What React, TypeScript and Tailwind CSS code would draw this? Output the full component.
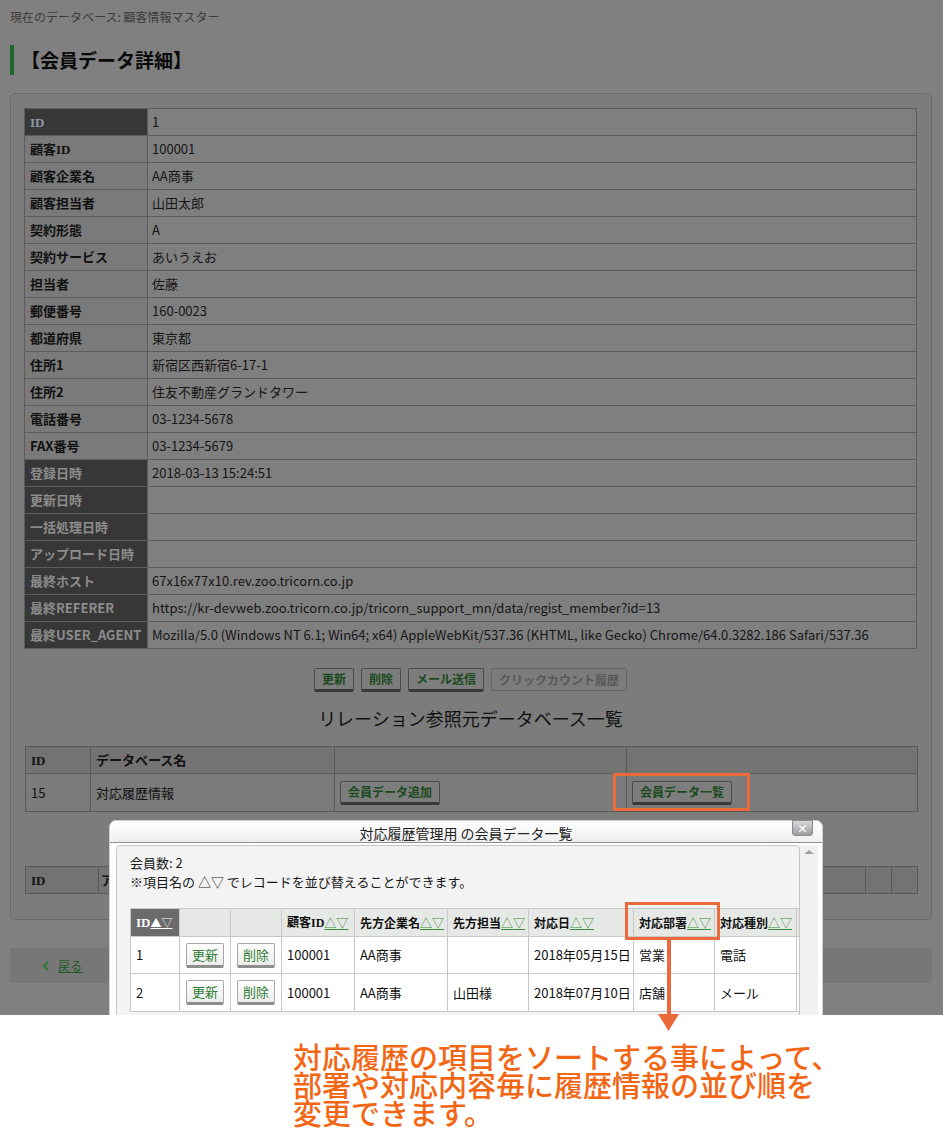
import React from "react";

type Row = [string, string, boolean];

const rows: Row[] = [
  ["ID", "1", true],
  ["顧客ID", "100001", false],
  ["顧客企業名", "AA商事", false],
  ["顧客担当者", "山田太郎", false],
  ["契約形態", "A", false],
  ["契約サービス", "あいうえお", false],
  ["担当者", "佐藤", false],
  ["郵便番号", "160-0023", false],
  ["都道府県", "東京都", false],
  ["住所1", "新宿区西新宿6-17-1", false],
  ["住所2", "住友不動産グランドタワー", false],
  ["電話番号", "03-1234-5678", false],
  ["FAX番号", "03-1234-5679", false],
  ["登録日時", "2018-03-13 15:24:51", true],
  ["更新日時", "", true],
  ["一括処理日時", "", true],
  ["アップロード日時", "", true],
  ["最終ホスト", "67x16x77x10.rev.zoo.tricorn.co.jp", true],
  ["最終REFERER", "https://kr-devweb.zoo.tricorn.co.jp/tricorn_support_mn/data/regist_member?id=13", true],
  [
    "最終USER_AGENT",
    "Mozilla/5.0 (Windows NT 6.1; Win64; x64) AppleWebKit/537.36 (KHTML, like Gecko) Chrome/64.0.3282.186 Safari/537.36",
    true,
  ],
];

function WithSerifID({ text }: { text: string }) {
  const parts = text.split(/(ID)/);
  return (
    <>
      {parts.map((p, i) =>
        p === "ID" ? (
          <span key={i} className="font-['Liberation_Serif',serif]">
            ID
          </span>
        ) : (
          <span key={i}>{p}</span>
        )
      )}
    </>
  );
}

function PageBtn({ children, disabled }: { children: React.ReactNode; disabled?: boolean }) {
  if (disabled) {
    return (
      <span className="inline-flex items-center h-[23px] px-[7px] rounded-[2px] border border-[#666666] bg-[#7c7c7c] text-[12px] font-bold text-[#585858] leading-none">
        {children}
      </span>
    );
  }
  return (
    <span className="inline-flex items-center h-[24px] px-[7px] rounded-[2px] border border-[#4c4c4c] border-b-[3px] border-b-[#3a3a3a] bg-[#7d7d7d] text-[12px] font-bold text-[#1b4a1e] leading-none">
      {children}
    </span>
  );
}

function ModalBtn({ children }: { children: React.ReactNode }) {
  return (
    <span className="inline-flex items-center justify-center h-[25px] w-[38px] rounded-[2px] border border-[#a8a8a8] border-b-[3px] border-b-[#8c8c8c] bg-linear-to-b from-white to-[#ececec] text-[13px] text-[#2e7d32] leading-none">
      {children}
    </span>
  );
}

function Sort({ white, filled }: { white?: boolean; filled?: boolean }) {
  return (
    <span
      className={
        white
          ? "underline text-white font-normal text-[11px]"
          : "underline text-[#3b8f3b] font-normal text-[12px]"
      }
    >
      {filled ? "▲▽" : "△▽"}
    </span>
  );
}

const modalCols = [49, 51, 51, 73, 93, 81, 105, 81, 82, 100];
const modalHeaders = ["ID", "", "", "顧客ID", "先方企業名", "先方担当", "対応日", "対応部署", "対応種別", "対応内容"];
const modalRows = [
  ["1", "btn", "btn", "100001", "AA商事", "", "2018年05月15日", "営業", "電話", ""],
  ["2", "btn", "btn", "100001", "AA商事", "山田様", "2018年07月10日", "店舗", "メール", ""],
];

export default function App() {
  return (
    <div className="relative w-[943px] h-[1137px] overflow-hidden bg-white font-['Noto_Sans_CJK_JP',sans-serif] text-[#111111]">
      {/* page area (dimmed by modal overlay) */}
      <div className="relative h-[1015px] overflow-hidden bg-[#808080]">
        <div className="px-[10px]">
          <div className="pt-[9px] text-[12px] leading-[16px] text-[#3c3c3c]">現在のデータベース: 顧客情報マスター</div>

          <div className="mt-[20px] h-[30px] flex items-center border-l-[4px] border-[#1d6a2a] pl-[7px] text-[19px] font-bold text-[#0a0a0a]">
            【会員データ詳細】
          </div>

          {/* main panel */}
          <div className="mt-[18px] w-[922px] rounded-[5px] border border-[#6a6a6a] bg-[#7c7c7c] pt-[14px] pl-[13px] pb-[25px]">
            <div className="w-[893px] border-t border-l border-r border-[#5c5c5c] text-[13px]">
              {rows.map(([label, value, dark], i) => (
                <div key={i} className="flex h-[27px] border-b border-[#5c5c5c]">
                  <div
                    className={
                      dark
                        ? "w-[123px] shrink-0 border-r border-[#5c5c5c] bg-[#373737] pl-[5px] leading-[26px] font-bold text-[#8c8c8c] whitespace-nowrap"
                        : "w-[123px] shrink-0 border-r border-[#5c5c5c] bg-[#7a7a7a] pl-[5px] leading-[26px] font-bold text-[#111111] whitespace-nowrap"
                    }
                  >
                    {label === "ID" ? (
                      <span className="font-['Liberation_Serif',serif] text-[#8d99a3]">ID</span>
                    ) : (
                      <WithSerifID text={label} />
                    )}
                  </div>
                  <div className="flex-1 bg-[#7f7f7f] pl-[4px] leading-[26px] text-[#161616] whitespace-nowrap overflow-hidden">
                    {value}
                  </div>
                </div>
              ))}
            </div>

            <div className="mt-[19px] w-[893px] flex justify-center gap-[7px]">
              <PageBtn>更新</PageBtn>
              <PageBtn>削除</PageBtn>
              <PageBtn>メール送信</PageBtn>
              <PageBtn disabled>クリックカウント履歴</PageBtn>
            </div>

            <div className="mt-[14px] w-[893px] text-center text-[18px] leading-[24px] text-[#111111]">
              リレーション参照元データベース一覧
            </div>

            {/* relation table */}
            <div className="mt-[16px] ml-[1px] w-[893px] border-t border-l border-r border-[#5a5a5a] text-[13px]">
              <div className="flex h-[27px] border-b border-[#5a5a5a] bg-[#737373] font-bold leading-[26px]">
                <div className="w-[65px] border-r border-[#5a5a5a] pl-[5px]">
                  <span className="font-['Liberation_Serif',serif]">ID</span>
                </div>
                <div className="w-[244px] border-r border-[#5a5a5a] pl-[5px]">データベース名</div>
                <div className="w-[292px] border-r border-[#5a5a5a]"></div>
                <div className="flex-1"></div>
              </div>
              <div className="flex h-[38px] border-b border-[#5a5a5a] bg-[#7b7b7b] items-stretch">
                <div className="w-[65px] border-r border-[#5a5a5a] pl-[5px] flex items-center">15</div>
                <div className="w-[244px] border-r border-[#5a5a5a] pl-[5px] flex items-center">対応履歴情報</div>
                <div className="w-[292px] border-r border-[#5a5a5a] pl-[5px] flex items-center">
                  <PageBtn>会員データ追加</PageBtn>
                </div>
                <div className="flex-1 pl-[5px] flex items-center">
                  <PageBtn>会員データ一覧</PageBtn>
                </div>
              </div>
            </div>

            {/* second table (behind modal) */}
            <div className="mt-[54px] ml-[1px] w-[893px] flex h-[28px] border border-[#5a5a5a] bg-[#737373] text-[13px] font-bold leading-[26px]">
              <div className="w-[73px] border-r border-[#5a5a5a] pl-[5px]">
                <span className="font-['Liberation_Serif',serif]">ID</span>
              </div>
              <div className="w-[724px] border-r border-[#5a5a5a] pl-[2px]">ア</div>
              <div className="w-[43px] border-r border-[#5a5a5a]"></div>
              <div className="w-[26px] border-r border-[#5a5a5a]"></div>
              <div className="flex-1"></div>
            </div>
          </div>

          {/* back bar */}
          <div className="mt-[28px] w-[922px] h-[35px] bg-[#777777] flex items-center pl-[32px]">
            <svg width="8" height="10" viewBox="0 0 8 10" className="mr-[8px]">
              <path d="M6 1 L2 5 L6 9" fill="none" stroke="#2b7a30" strokeWidth="2" />
            </svg>
            <span className="text-[12px] underline text-[#1f5a27]">戻る</span>
          </div>
        </div>

        {/* modal */}
        <div className="absolute left-[109px] top-[820px] w-[714px] h-[260px] rounded-t-[7px] border border-[#cfcfcf] bg-white">
          <div className="relative h-[22px] border-b border-[#8f8f8f] rounded-t-[7px] bg-linear-to-b from-white to-[#efefef] text-center text-[14px] leading-[24px] text-[#222222]">
            対応履歴管理用 の会員データ一覧
            <div className="absolute right-[9px] top-[-1px] w-[21px] h-[16px] rounded-b-[3px] border border-[#8a8a8a] bg-linear-to-b from-[#d8d8d8] to-[#9c9c9c] flex items-center justify-center text-[11px] font-bold leading-none text-white">
              ×
            </div>
          </div>
          <div className="flex pl-[6px] pt-[2px] h-[236px]">
            <div className="w-[684px] h-full shrink-0 overflow-hidden rounded-t-[4px] border border-[#c6c6c6] bg-[#f3f3f3] pl-[13px] pt-[7px]">
              <div className="text-[13px] leading-[19px] text-[#1a1a1a]">会員数: 2</div>
              <div className="text-[13px] leading-[19px] text-[#1a1a1a] whitespace-nowrap">※項目名の △▽ でレコードを並び替えることができます。</div>

              <div className="mt-[17px] w-max border-t border-l border-[#c8c8c8] text-[13px]">
                <div className="flex h-[28px] border-b border-[#c8c8c8] bg-[#e6e8e6] text-[12px]">
                  {modalHeaders.map((h, i) => (
                    <div
                      key={i}
                      style={{ width: modalCols[i] }}
                      className={
                        i === 0
                          ? "shrink-0 border-r border-[#c8c8c8] bg-[#6b6b6b] pl-[5px] flex items-center font-bold text-white whitespace-nowrap overflow-hidden"
                          : "shrink-0 border-r border-[#c8c8c8] pl-[5px] flex items-center font-bold text-[#111111] whitespace-nowrap overflow-hidden"
                      }
                    >
                      {h !== "" && (
                        <>
                          <span className={i === 0 ? "text-[13px]" : ""}>
                            <WithSerifID text={h} />
                          </span>
                          {i === 0 ? <Sort white filled /> : <Sort />}
                        </>
                      )}
                    </div>
                  ))}
                </div>
                {modalRows.map((r, ri) => (
                  <div
                    key={ri}
                    className={
                      ri === 0
                        ? "flex h-[37px] border-b border-[#c8c8c8] bg-white"
                        : "flex h-[38px] border-b border-[#c8c8c8] bg-white"
                    }
                  >
                    {r.map((c, ci) => (
                      <div
                        key={ci}
                        style={{ width: modalCols[ci] }}
                        className={
                          c === "btn"
                            ? "shrink-0 border-r border-[#c8c8c8] flex items-center justify-center"
                            : "shrink-0 border-r border-[#c8c8c8] pl-[5px] flex items-center text-[#111111] whitespace-nowrap"
                        }
                      >
                        {c === "btn" ? <ModalBtn>{ci === 1 ? "更新" : "削除"}</ModalBtn> : c}
                      </div>
                    ))}
                  </div>
                ))}
              </div>
            </div>
            <div className="w-[18px] h-full shrink-0 bg-[#f1f1f1] flex justify-center pt-[5px]">
              <div className="w-0 h-0 border-l-[5px] border-r-[5px] border-b-[4px] border-l-transparent border-r-transparent border-b-[#a0a0a0]"></div>
            </div>
          </div>
        </div>
      </div>

      {/* annotation text */}
      <div className="pl-[293px] pt-[27px] text-[29px] leading-[28px] font-medium text-[#f26614] whitespace-nowrap">
        対応履歴の項目をソートする事によって、
        <br />
        部署や対応内容毎に履歴情報の並び順を
        <br />
        変更できます。
      </div>

      {/* annotation highlights */}
      <div className="absolute left-[613px] top-[773px] w-[137px] h-[38px] border-[3px] border-[#eb6a3c]"></div>
      <div className="absolute left-[625px] top-[902px] w-[95px] h-[38px] border-[3px] border-[#eb6a3c]"></div>
      <div className="absolute left-[667px] top-[940px] w-[4px] h-[76px] bg-[#eb6a3c]"></div>
      <svg className="absolute left-[658px] top-[1014px]" width="21" height="17" viewBox="0 0 21 17">
        <polygon points="0,0 21,0 10.5,17" fill="#eb6a3c" />
      </svg>
    </div>
  );
}
